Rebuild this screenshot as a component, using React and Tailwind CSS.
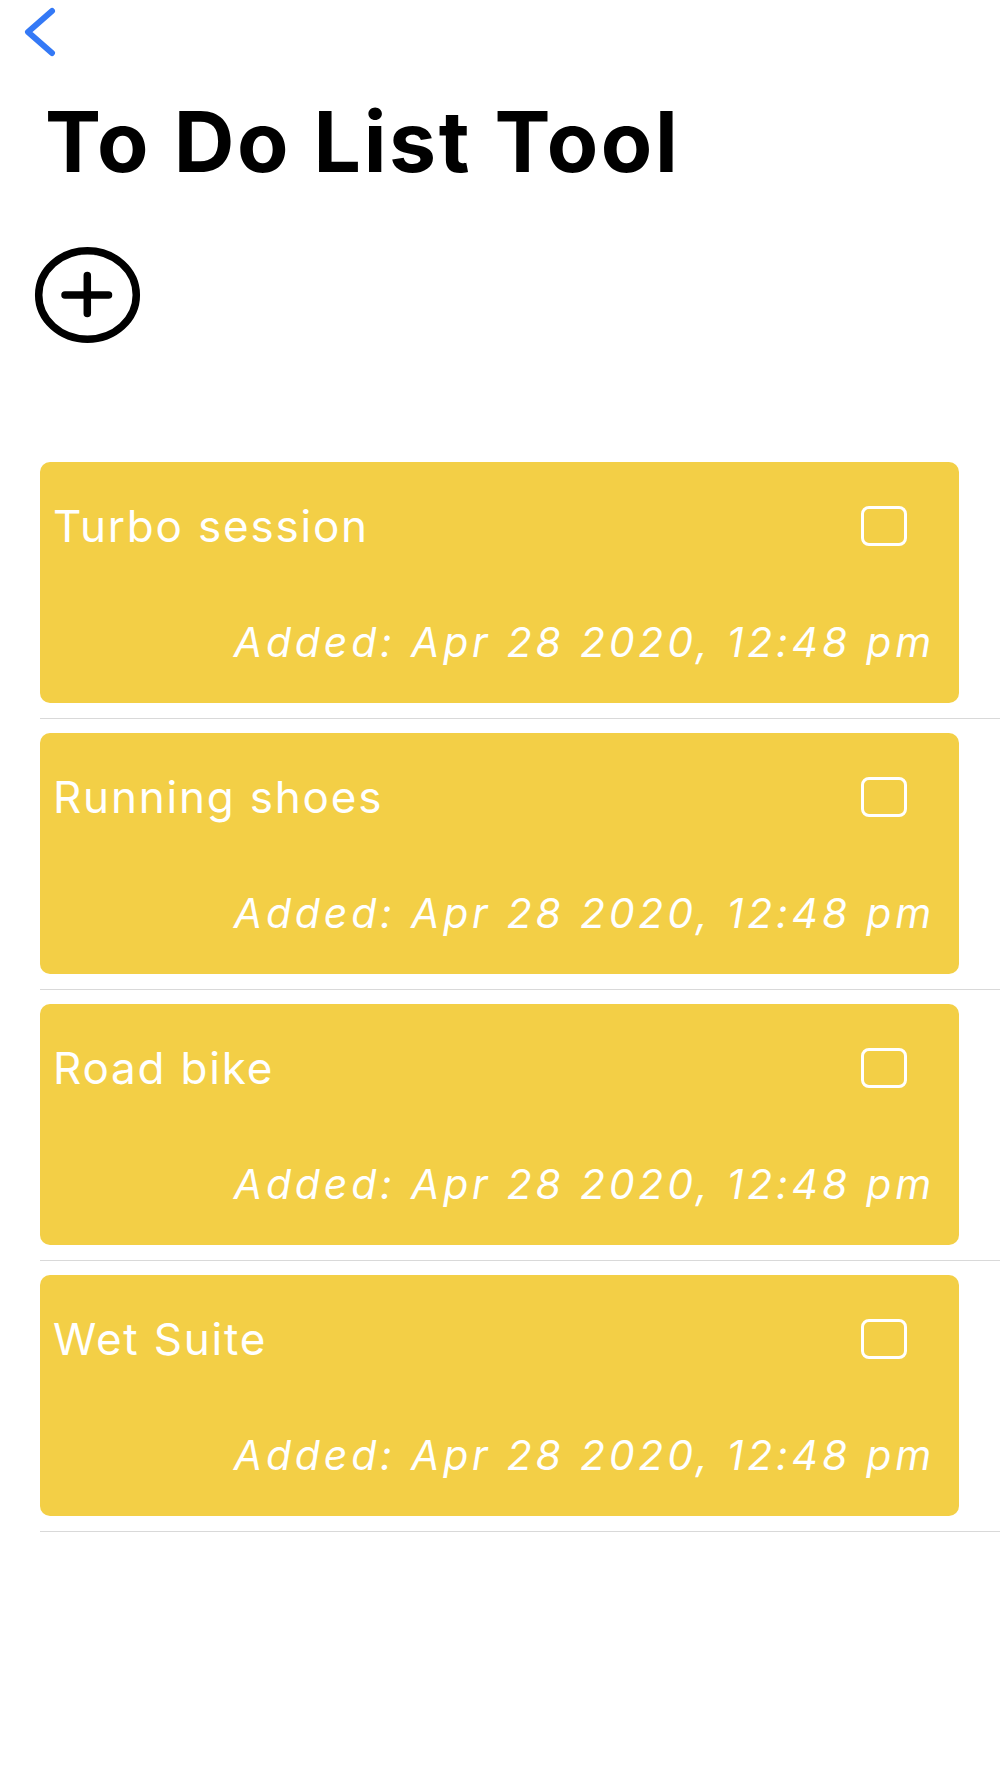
const todos = [
  { title: "Turbo session", added: "Apr 28 2020, 12:48 pm" },
  { title: "Running shoes", added: "Apr 28 2020, 12:48 pm" },
  { title: "Road bike", added: "Apr 28 2020, 12:48 pm" },
  { title: "Wet Suite", added: "Apr 28 2020, 12:48 pm" },
];

function TodoCard({ title, added }) {
  return (
    <li className="flex flex-col">
      <div className="mr-[41px] flex h-[241px] flex-col justify-between rounded-[10px] bg-[#f3cf46] pb-[40px] pl-[13px] pr-[24px] pt-[44px] text-white">
        <div className="flex h-[40px] items-center justify-between">
          <span className="text-[44px] leading-none tracking-[1.8px]">{title}</span>
          <span className="mr-[28px] h-[40px] w-[46px] rounded-[8px] border-[3px] border-white" />
        </div>
        <p className="text-right text-[41px] italic leading-none tracking-[3.8px]">Added: {added}</p>
      </div>
      <div className="mb-[14px] mt-[15px] h-px bg-[#d9d9d9]" />
    </li>
  );
}

export default function App() {
  return (
    <div className="min-h-[1778px] bg-white font-[Inter,sans-serif]">
      {/* back button */}
      <button className="ml-[22px] mt-[4px] block" aria-label="Back">
        <svg width="36" height="56" viewBox="0 0 36 56" fill="none">
          <path d="M30 7 L6 28 L30 49" stroke="#3479f6" strokeWidth="6" strokeLinecap="round" strokeLinejoin="round" />
        </svg>
      </button>

      <h1 className="ml-[45px] mt-[40px] text-[84px] font-bold leading-none tracking-[2.6px] text-black">To Do List Tool</h1>

      <button className="ml-[34px] mt-[62px] block" aria-label="Add item">
        <svg width="108" height="97" viewBox="0 0 108 97" fill="none">
          <ellipse cx="53.5" cy="49" rx="48.8" ry="44.2" stroke="black" strokeWidth="7.5" />
          <path d="M31 49 H74.5 M53.3 29.5 V67.5" stroke="black" strokeWidth="7.5" strokeLinecap="round" />
        </svg>
      </button>

      <ul className="mt-[119px] pl-[40px]">
        {todos.map((t, i) => (
          <TodoCard key={i} {...t} />
        ))}
      </ul>
    </div>
  );
}
